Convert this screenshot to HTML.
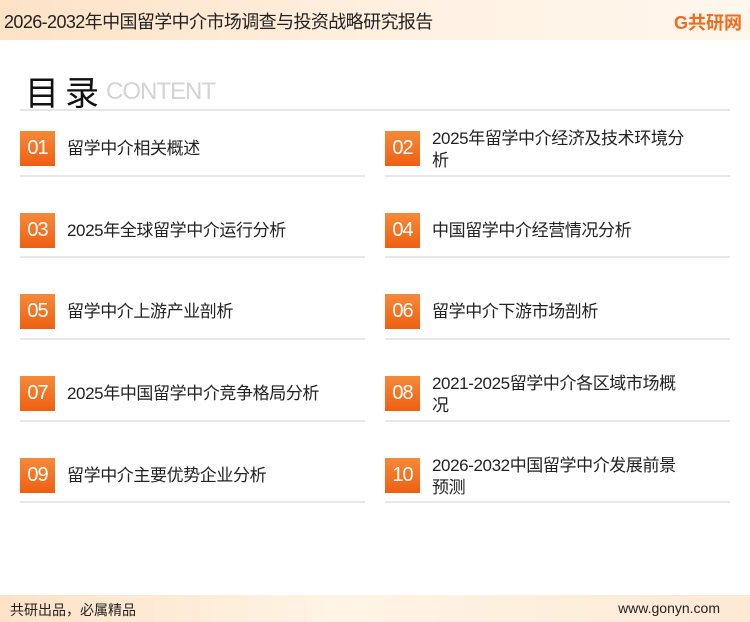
<!DOCTYPE html><html><head><meta charset="utf-8"><style>
body{margin:0;width:750px;height:622px;position:relative;background:#fff;font-family:"Liberation Sans","Noto Sans CJK SC",sans-serif;overflow:hidden}
.hd{position:absolute;left:0;top:0;width:750px;height:40px;background:linear-gradient(90deg,#fde2c6,#fff2e4 60%,#fff6ec)}
.hd .t{position:absolute;left:4px;top:8px;font-size:18px;color:#222;letter-spacing:-0.6px}
.logo{position:absolute;right:8px;top:9px;font-size:18px;font-weight:bold;color:#f26a1b}
.ft{position:absolute;left:0;top:595px;width:750px;height:27px;background:linear-gradient(90deg,#fde2c6,#fff4e6 45%,#fde9d4)}
.ft span{position:absolute;top:5px;font-size:14px;color:#222}
.ttl{position:absolute;left:25px;top:66px;font-size:34px;color:#111;letter-spacing:6px}
.cn{position:absolute;left:106px;top:78px;font-size:24px;color:#d4d4d4;letter-spacing:-1px}
.hl{position:absolute;left:20px;top:109px;width:710px;height:2px;background:#e6e6e6}
.b{position:absolute;width:35px;height:35px;background:linear-gradient(180deg,#f58a3a,#ee5f12);color:#fff;font-size:20px;line-height:35px;text-align:center;letter-spacing:-1px}
.x{position:absolute;font-size:17px;color:#222;line-height:22px;width:268px;letter-spacing:-0.4px}
.u{position:absolute;height:2px;background:#e8e8e8;width:345px}
</style></head><body>
<div class="hd"><div class="t">2026-2032年中国留学中介市场调查与投资战略研究报告</div><div class="logo">G共研网</div></div>
<div class="ttl">目录</div><div class="cn">CONTENT</div><div class="hl"></div>

<div class="b" style="left:20px;top:131px">01</div><div class="x" style="left:67px;top:138px">留学中介相关概述</div><div class="u" style="left:20px;top:175px"></div>
<div class="b" style="left:385px;top:131px">02</div><div class="x" style="left:432px;top:128px">2025年留学中介经济及技术环境分析</div><div class="u" style="left:385px;top:175px"></div>

<div class="b" style="left:20px;top:213px">03</div><div class="x" style="left:67px;top:220px">2025年全球留学中介运行分析</div><div class="u" style="left:20px;top:256px"></div>
<div class="b" style="left:385px;top:213px">04</div><div class="x" style="left:432px;top:220px">中国留学中介经营情况分析</div><div class="u" style="left:385px;top:256px"></div>

<div class="b" style="left:20px;top:294px">05</div><div class="x" style="left:67px;top:301px">留学中介上游产业剖析</div><div class="u" style="left:20px;top:338px"></div>
<div class="b" style="left:385px;top:294px">06</div><div class="x" style="left:432px;top:301px">留学中介下游市场剖析</div><div class="u" style="left:385px;top:338px"></div>

<div class="b" style="left:20px;top:376px">07</div><div class="x" style="left:67px;top:383px">2025年中国留学中介竞争格局分析</div><div class="u" style="left:20px;top:420px"></div>
<div class="b" style="left:385px;top:376px">08</div><div class="x" style="left:432px;top:373px;width:255px">2021-2025留学中介各区域市场概况</div><div class="u" style="left:385px;top:420px"></div>

<div class="b" style="left:20px;top:458px">09</div><div class="x" style="left:67px;top:465px">留学中介主要优势企业分析</div><div class="u" style="left:20px;top:501px"></div>
<div class="b" style="left:385px;top:458px">10</div><div class="x" style="left:432px;top:455px;width:245px">2026-2032中国留学中介发展前景预测</div><div class="u" style="left:385px;top:501px"></div>

<div class="ft"><span style="left:10px">共研出品，必属精品</span><span style="right:30px">www.gonyn.com</span></div>
</body></html>
